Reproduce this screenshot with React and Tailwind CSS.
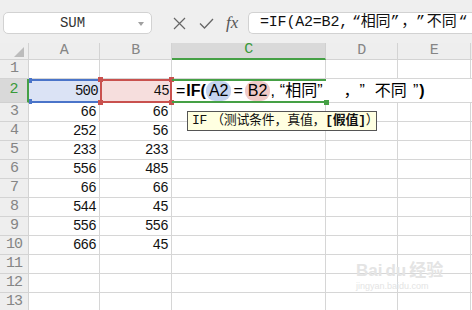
import React from 'react';

const A = ['66', '252', '233', '556', '66', '544', '556', '666'];
const B = ['66', '56', '233', '485', '66', '45', '556', '45'];

function RowHead({ n, active }) {
  return (
    <div
      className={`w-[29px] shrink-0 h-full flex items-center justify-center border-b border-r text-[15px] tracking-[-1px] ${
        active
          ? 'bg-[#d9d9d9] text-[#3a9a3a] border-b-[#d0d0d0] border-r-2 border-r-[#45a045]'
          : 'bg-[#eeeeee] text-[#858585] border-[#d3d3d3]'
      }`}
    >
      {n}
    </div>
  );
}

function NumCell({ w, v }) {
  return (
    <div className={`${w} shrink-0 h-full flex items-center justify-end pr-[3px] border-r border-b border-[#d6d6d6] text-[#111]`}>
      {v}
    </div>
  );
}

function Empty({ w }) {
  return <div className={`${w} shrink-0 h-full border-r border-b border-[#d6d6d6]`} />;
}

function DataRow({ n, a, b }) {
  return (
    <div className="flex h-[19px]">
      <RowHead n={n} />
      {a !== undefined ? <NumCell w="w-[71px]" v={a} /> : <Empty w="w-[71px]" />}
      {b !== undefined ? <NumCell w="w-[72px]" v={b} /> : <Empty w="w-[72px]" />}
      <Empty w="w-[154px]" />
      <Empty w="w-[72px]" />
      <Empty w="w-[73px]" />
      <div className="flex-1 h-full border-b border-[#d6d6d6]" />
    </div>
  );
}

function ColHead({ label, w, active }) {
  return (
    <div
      className={`${w} shrink-0 h-full flex items-center justify-center border-r border-b text-[15px] ${
        active
          ? 'bg-[#d9d9d9] text-[#3a9a3a] border-r-[#d0d0d0] border-b-2 border-b-[#45a045]'
          : 'bg-[#eeeeee] text-[#858585] border-[#d3d3d3]'
      }`}
    >
      {label}
    </div>
  );
}

function Sq({ className }) {
  return <div className={`absolute h-[5px] ${className}`} />;
}

export default function App() {
  return (
    <div className="relative w-[472px] h-[310px] overflow-hidden bg-white font-[family-name:'Liberation_Mono','Noto_Sans_CJK_SC',monospace] text-[14px] tracking-[-0.7px]">
      {/* toolbar */}
      <div className="flex items-start h-[43px] bg-[#efefef] pt-[12px]">
        <div className="ml-[3px] w-[149px] h-[22px] bg-white border border-[#d2d2d2] rounded-[5px] flex items-center relative">
          <span className="flex-1 text-center text-[14px] text-[#333] tracking-normal pr-[10px]">SUM</span>
          <div className="absolute right-[7px] top-[9px] w-0 h-0 border-l-[3px] border-r-[3px] border-t-[4px] border-l-transparent border-r-transparent border-t-[#a0a0a0]" />
        </div>
        <svg className="ml-[21px] mt-[5px]" width="13" height="13" viewBox="0 0 13 13">
          <path d="M1 1 L12 12 M12 1 L1 12" stroke="#666" strokeWidth="1.2" fill="none" />
        </svg>
        <svg className="ml-[13px] mt-[6px]" width="15" height="11" viewBox="0 0 15 11">
          <path d="M1 5.5 L5.5 10 L14 1" stroke="#666" strokeWidth="1.3" fill="none" />
        </svg>
        <span className="ml-[12px] mt-[1px] w-[16px] text-[17px] leading-[20px] italic text-[#555] font-[family-name:'Liberation_Serif',serif] tracking-normal">fx</span>
        <div className="ml-[6px] flex-1 h-[22px] bg-white border border-[#d2d2d2] border-r-0 rounded-l-[5px] flex items-center pl-[11px] whitespace-nowrap overflow-hidden text-[15px] text-[#111] tracking-[-0.2px]">
          <span>=IF(A2=B2,</span>
          <span className="ml-[4px]">“相同”</span>
          <span className="ml-[2px]">，</span>
          <span>”</span>
          <span className="ml-[2px]">不同</span>
          <span className="ml-[2px]">“</span>
        </div>
      </div>

      {/* header row */}
      <div className="flex h-[17px]">
        <div className="w-[29px] shrink-0 h-full bg-[#eeeeee] border-r border-b border-[#d3d3d3] relative">
          <div className="absolute right-[4px] bottom-[2px] w-0 h-0 border-l-[10px] border-b-[10px] border-l-transparent border-b-[#bcbcbc]" />
        </div>
        <ColHead label="A" w="w-[71px]" />
        <ColHead label="B" w="w-[72px]" />
        <ColHead label="C" w="w-[154px]" active />
        <ColHead label="D" w="w-[72px]" />
        <ColHead label="E" w="w-[73px]" />
        <div className="flex-1 h-full bg-[#eeeeee] border-b border-[#d3d3d3]" />
      </div>

      <DataRow n="1" />

      {/* row 2 */}
      <div className="flex h-[24px]">
        <RowHead n="2" active />
        <div className="relative w-[71px] shrink-0 h-full bg-[#dbe3f5] border-t-2 border-b-2 border-[#4a74c9] flex items-center justify-end pr-[2px] text-[#111]">
          500
          <Sq className="left-0 -top-[3px] w-[3px] bg-[#4a74c9]" />
          <Sq className="left-0 -bottom-[3px] w-[3px] bg-[#4a74c9]" />
        </div>
        <div className="relative w-[72px] shrink-0 h-full bg-[#f6dedd] border-2 border-[#c9514e] flex items-center justify-end pr-[1px] text-[#111]">
          45
          <Sq className="-left-[4px] -top-[4px] w-[5px] bg-[#c9514e]" />
          <Sq className="-left-[4px] -bottom-[4px] w-[5px] bg-[#c9514e]" />
          <Sq className="-right-[4px] -top-[4px] w-[5px] bg-[#c9514e]" />
          <Sq className="-right-[4px] -bottom-[4px] w-[5px] bg-[#c9514e]" />
        </div>
        <div className="relative w-[154px] shrink-0 h-full border-t-2 border-b-2 border-[#45a045]">
          <div className="absolute left-[4px] top-0 bottom-0 flex items-center whitespace-nowrap text-[16px] text-black tracking-normal font-[family-name:'Liberation_Sans','Noto_Sans_CJK_SC',sans-serif]">
            <span>=</span>
            <span className="font-bold ml-[1px]">IF(</span>
            <span className="bg-[#c5d4ef] rounded-[9px] px-[3px] leading-[20px]">A2</span>
            <span className="mx-[2px]">=</span>
            <span className="bg-[#f1cac8] rounded-[9px] px-[3px] leading-[20px]">B2</span>
            <span>,</span>
            <span className="ml-[5px]">“相同”</span>
            <span className="ml-[21px]">，</span>
            <span>”</span>
            <span className="ml-[10px]">不同</span>
            <span className="ml-[6px]">”</span>
            <span className="font-bold ml-[1px]">)</span>
          </div>
          <Sq className="-right-[3px] -bottom-[4px] w-[5px] bg-[#45a045]" />
        </div>
        <div className="w-[72px] shrink-0 h-full border-b border-[#d6d6d6]" />
        <div className="w-[73px] shrink-0 h-full border-b border-[#d6d6d6]" />
        <div className="flex-1 h-full border-b border-[#d6d6d6]" />
      </div>

      {A.map((a, i) => (
        <DataRow key={i} n={String(i + 3)} a={a} b={B[i]} />
      ))}
      <DataRow n="11" />
      <DataRow n="12" />
      <DataRow n="13" />

      {/* tooltip */}
      <div className="absolute left-[187px] top-[111px] w-[190px] h-[20px] bg-[#ffffe1] border border-[#555] flex items-center pl-[4px] whitespace-nowrap text-[13px] tracking-[-0.3px] text-[#111]">
        IF<span className="ml-[4px]">（测试条件，真值，</span><span className="font-bold">[假值]</span>）
      </div>

      {/* watermark */}
      <div className="absolute left-[356px] top-[262px] text-[#e4e4e4] tracking-normal font-[family-name:'Liberation_Sans','Noto_Sans_CJK_SC',sans-serif] pointer-events-none">
        <div className="text-[17px] leading-[18px] font-bold">Bai<span className="mx-[3px]">du</span>经验</div>
        <div className="text-[9px] leading-[12px]">jingyan.baidu.com</div>
      </div>
    </div>
  );
}
